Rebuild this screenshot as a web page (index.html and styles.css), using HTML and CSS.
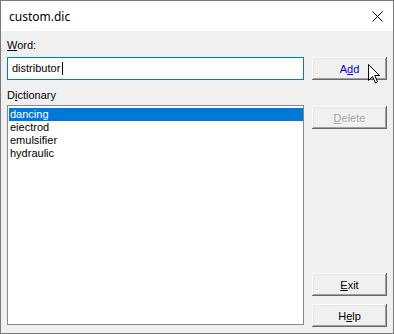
FILE: index.html
```html
<!DOCTYPE html>
<html>
<head>
<meta charset="utf-8">
<link rel="stylesheet" href="styles.css">
</head>
<body>
<div class="window">
  <div class="titlebar">
    <span class="title">custom.dic</span>
    <svg class="close" width="12" height="12" viewBox="0 0 12 12"><path d="M0.5 0.5 L10.5 10.5 M10.5 0.5 L0.5 10.5" stroke="#000" stroke-width="1" fill="none"/></svg>
  </div>
  <div class="content">
    <div class="left">
      <div class="label label-word"><u>W</u>ord:</div>
      <div class="input"><span class="input-text">distributor</span><span class="caret"></span></div>
      <div class="label label-dict">D<u>i</u>ctionary</div>
      <div class="list">
        <div class="item selected">dancing</div>
        <div class="item">eiectrod</div>
        <div class="item">emulsifier</div>
        <div class="item">hydraulic</div>
      </div>
    </div>
    <div class="right">
      <div class="btn btn-add hot">A<u>d</u>d</div>
      <div class="btn btn-delete disabled"><u>D</u>elete</div>
      <div class="spacer"></div>
      <div class="btn btn-exit"><u>E</u>xit</div>
      <div class="btn btn-help">H<u>e</u>lp</div>
    </div>
  </div>
  <svg class="pointer" width="13" height="20" viewBox="0 0 13 20"><path d="M0.5 0.5 L0.5 16.5 L4.5 12.5 L7.5 19 L9.5 18 L6.8 11.5 L11.5 11.5 Z" fill="#fff" stroke="#000" stroke-width="1" stroke-linejoin="miter"/></svg>
</div>
</body>
</html>
```

FILE: styles.css
```css
html, body {
  margin: 0;
  padding: 0;
  background: #fff;
}
.window {
  position: relative;
  width: 394px;
  height: 334px;
  box-sizing: border-box;
  border: 1px solid #7a7a7a;
  background: #f0f0f0;
  display: flex;
  flex-direction: column;
  font-family: "Liberation Sans", Arial, sans-serif;
  font-size: 11px;
  color: #000;
}
.titlebar {
  height: 30px;
  background: #fff;
  display: flex;
  align-items: center;
  justify-content: space-between;
  padding: 0 9px 0 8px;
  flex: none;
}
.title {
  font-family: "Noto Sans", "Open Sans", sans-serif;
  font-size: 12px;
  color: #000;
  margin-top: 1px;
}
.close {
  margin-top: 1px;
  margin-right: 0;
}
.content {
  flex: 1;
  display: grid;
  grid-template-columns: 297px 75px;
  column-gap: 8px;
  padding: 0 6px 0 6px;
}
.left {
  display: flex;
  flex-direction: column;
}
.label {
  line-height: 13px;
  height: 13px;
}
.label-word {
  margin-top: 8px;
}
.input {
  margin-top: 5px;
  height: 23px;
  box-sizing: border-box;
  border: 1px solid #0078d7;
  background: #fff;
  display: flex;
  align-items: center;
  padding-left: 4px;
}
.input-text {
  line-height: 13px;
}
.caret {
  display: inline-block;
  width: 1px;
  height: 13px;
  background: #000;
  margin-left: 2px;
}
.label-dict {
  margin-top: 9px;
}
.list {
  margin-top: 3px;
  height: 220px;
  box-sizing: border-box;
  border: 1px solid #828790;
  background: #fff;
  padding: 2px 0 0 1px;
}
.item {
  height: 13px;
  line-height: 13px;
  padding-left: 1px;
  white-space: nowrap;
}
.item.selected {
  background: #0078d7;
  color: #fff;
}
.right {
  display: flex;
  flex-direction: column;
  padding-bottom: 6px;
}
.btn {
  height: 23px;
  box-sizing: border-box;
  background: #f0f0f0;
  box-shadow: inset -1px -1px #696969, inset 1px 1px #fff, inset -2px -2px #a0a0a0, inset 2px 2px #e3e3e3;
  display: flex;
  align-items: center;
  justify-content: center;
  line-height: 13px;
  padding-top: 1px;
}
.btn-add {
  margin-top: 26px;
}
.btn.hot {
  color: #0000e0;
}
.btn-delete {
  margin-top: 26px;
}
.btn.disabled {
  color: #a0a0a0;
  text-shadow: 1px 1px #fff;
}
.spacer {
  flex: 1;
}
.btn-help {
  margin-top: 8px;
}
.pointer {
  position: absolute;
  left: 367px;
  top: 63px;
}
```
